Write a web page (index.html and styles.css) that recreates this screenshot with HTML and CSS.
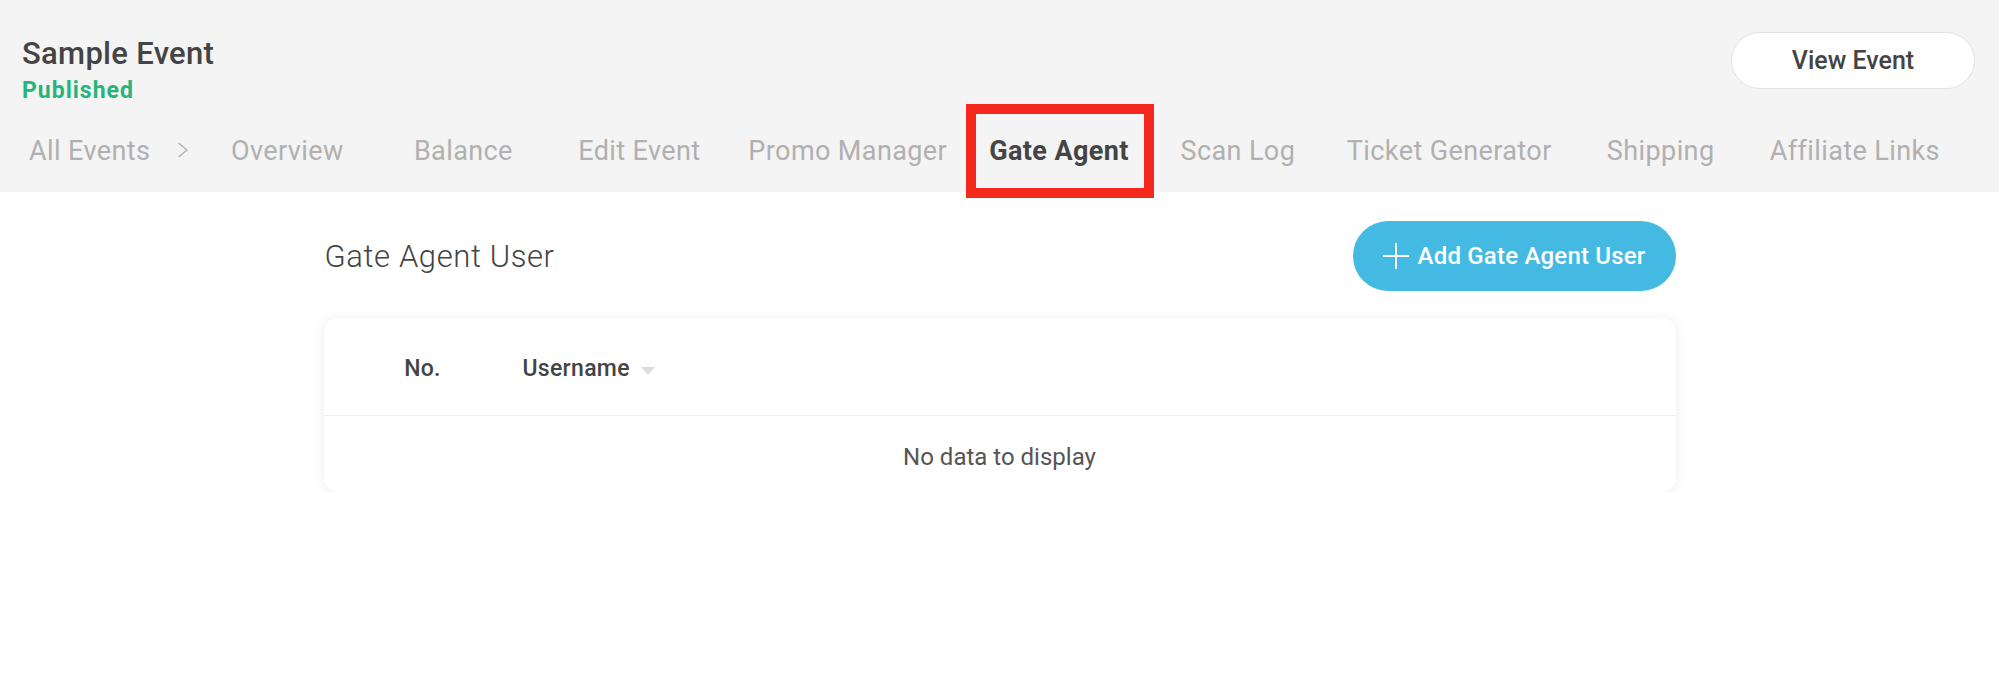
FILE: index.html
```html
<!DOCTYPE html>
<html lang="en">
<head>
  <meta charset="UTF-8" />
  <meta name="viewport" content="width=device-width, initial-scale=1.0"/>
  <title>Sample Event - Gate Agent</title>
  <link rel="stylesheet" href="styles.css">
</head>
<body>
  <header class="event-header">
    <div class="header-top">
      <div class="event-info">
        <h1 class="event-title">Sample Event</h1>
        <div class="event-status">Published</div>
      </div>
      <button class="view-btn">View Event</button>
    </div>

    <nav class="event-nav">
      <a class="crumb" href="#">All Events</a>
      <svg class="crumb-arrow" width="12" height="16" viewBox="0 0 12 16">
        <polyline points="1.5,1 10,8 1.5,15" fill="none" stroke="#b3b3b3" stroke-width="1.5" />
      </svg>
      <a class="tab" href="#">Overview</a>
      <a class="tab" href="#">Balance</a>
      <a class="tab" href="#">Edit Event</a>
      <a class="tab" href="#">Promo Manager</a>
      <a class="tab active" href="#">Gate Agent</a>
      <a class="tab" href="#">Scan Log</a>
      <a class="tab" href="#">Ticket Generator</a>
      <a class="tab" href="#">Shipping</a>
      <a class="tab" href="#">Affiliate Links</a>
    </nav>
  </header>

  <main class="content">
    <div class="section-head">
      <h2 class="section-title">Gate Agent User</h2>
      <button class="add-btn">
        <svg width="26" height="26" viewBox="0 0 26 26">
          <line x1="13" y1="0" x2="13" y2="26" stroke="#fff" stroke-width="2" />
          <line x1="0" y1="13" x2="26" y2="13" stroke="#fff" stroke-width="2" />
        </svg>
        Add Gate Agent User
      </button>
    </div>

    <div class="table-card">
      <div class="table-head">
        <div class="col-no">No.</div>
        <div class="col-user">
          Username
          <span class="sort-caret"></span>
        </div>
      </div>
      <div class="table-empty">No data to display</div>
    </div>
  </main>
</body>
</html>
```

FILE: styles.css
```css
body {
  margin: 0;
  font-family: Roboto, "Liberation Sans", sans-serif;
  color: #444;
  background: #fff;
}

.event-header {
  background-color: #f4f4f4;
  padding: 32px 24px 0 22px;
  height: 160px;
}
.header-top {
  display: flex;
  justify-content: space-between;
  align-items: flex-start;
}
.event-info {
  padding-top: 4px;
}
h1.event-title {
  margin: 0;
  font-size: 31px;
  line-height: 36px;
  font-weight: 500;
  letter-spacing: 0.3px;
  color: #444;
}
.event-status {
  margin-top: 5px;
  font-size: 23px;
  line-height: 28px;
  font-weight: 700;
  letter-spacing: 1px;
  color: #27b37a;
}
.view-btn {
  width: 244px;
  height: 57px;
  border: 1px solid #e2e2e2;
  border-radius: 29px;
  background: #fff;
  font-family: inherit;
  font-size: 25px;
  font-weight: 500;
  color: #444;
  cursor: pointer;
}

.event-nav {
  display: flex;
  align-items: center;
  margin-top: 7px;
  height: 80px;
}
.event-nav a {
  text-decoration: none;
  font-size: 27px;
  letter-spacing: 0.4px;
  color: #b0b0b0;
  white-space: nowrap;
}
.crumb {
  margin-left: 7px;
  line-height: 78px;
  padding-bottom: 2px;
}
.crumb-arrow {
  margin: 0 10px 4px 27px;
}
.tab {
  position: relative;
  min-width: 176px;
  box-sizing: border-box;
  padding: 0 21px 2px;
  line-height: 78px;
  text-align: center;
}
.event-nav a.active {
  color: #444;
  font-weight: 700;
}
/* red highlight box around the current tab */
.tab.active::after {
  content: "";
  position: absolute;
  top: -8px;
  bottom: -6px;
  left: -2px;
  right: -4px;
  border: 10px solid #f4281d;
}

.content {
  width: 1352px;
  margin: 0 auto;
}
.section-head {
  display: flex;
  justify-content: space-between;
  align-items: center;
  margin-top: 29px;
  height: 70px;
}
h2.section-title {
  margin: 0 0 0 1px;
  font-size: 31px;
  font-weight: 300;
  letter-spacing: 0.6px;
  color: #444;
}
.add-btn {
  display: flex;
  align-items: center;
  gap: 9px;
  height: 70px;
  padding: 0 30px;
  border: none;
  border-radius: 35px;
  background-color: #44b9e2;
  font-family: inherit;
  font-size: 24px;
  font-weight: 500;
  letter-spacing: 0.2px;
  color: #fff;
  cursor: pointer;
}

.table-card {
  margin-top: 27px;
  background: #fff;
  border-radius: 15px;
  box-shadow: 0 2px 14px rgba(0, 0, 0, 0.08);
}
.table-head {
  display: grid;
  grid-template-columns: 198px 1fr;
  padding-top: 4px;
  line-height: 93px;
  border-bottom: 1px solid #efefef;
  font-size: 23px;
  font-weight: 500;
  letter-spacing: 0.3px;
  color: #444;
}
.col-no {
  text-align: center;
}
.col-user {
  display: flex;
  align-items: center;
  padding-left: 1px;
}
.sort-caret {
  width: 0;
  height: 0;
  margin: 4px 0 0 11px;
  border-left: 7px solid transparent;
  border-right: 7px solid transparent;
  border-top: 8px solid #dcdcdc;
}
.table-empty {
  padding-top: 6px;
  line-height: 70px;
  text-align: center;
  font-size: 24px;
  color: #555;
}
```
